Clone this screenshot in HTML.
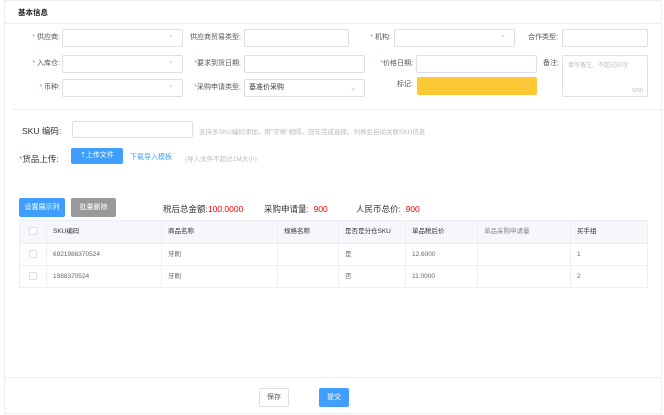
<!DOCTYPE html>
<html><head><meta charset="utf-8"><style>
*{box-sizing:border-box;margin:0;padding:0}
body{width:664px;height:415px;background:#fff;font-family:"Liberation Sans","Noto Sans CJK SC",sans-serif;font-size:7px;color:#333;position:relative;overflow:hidden}
.a{position:absolute}
.in{position:absolute;border:1px solid #dcdfe6;border-radius:2px;background:#fff;height:18px}
.ar::after{content:"⌄";position:absolute;right:8px;top:1px;color:#bbb;font-size:7px}
.lb{position:absolute;text-align:right;font-size:7px;color:#555;line-height:18px}
.r{color:#f56c6c}
.btn{position:absolute;border-radius:2px;color:#fff;font-size:7px;text-align:center}
table{border-collapse:collapse;position:absolute;left:19px;top:220px;width:629px;font-size:6.5px}
td,th{border:1px solid #ebeef5;text-align:left;padding-left:6px;font-weight:normal;vertical-align:middle;line-height:10px}
th{background:#f5f7fa;height:23px;color:#333}
td{height:22px;color:#666}
.cb{display:inline-block;width:8px;height:8px;border:1px solid #dcdfe6;border-radius:1px;background:#fff;vertical-align:middle}
</style></head><body>
<div class="a" style="left:4px;top:0;width:658px;height:414px;border:1px solid #eee"></div>
<div class="a" style="left:18px;top:7px;font-size:7.5px;font-weight:bold;color:#222">基本信息</div>
<div class="a" style="left:5px;top:23px;width:656px;border-top:1px solid #eee"></div>

<div class="lb" style="left:10px;top:29px;width:50px"><span class="r">* </span>供应商:</div>
<div class="in ar" style="left:62px;top:29px;width:121px"></div>
<div class="lb" style="left:180px;top:29px;width:61px">供应商贸易类型:</div>
<div class="in" style="left:244px;top:29px;width:105px"></div>
<div class="lb" style="left:350px;top:29px;width:41px"><span class="r">* </span>机构:</div>
<div class="in ar" style="left:394px;top:29px;width:121px"></div>
<div class="lb" style="left:515px;top:29px;width:43px">合作类型:</div>
<div class="in" style="left:562px;top:29px;width:86px"></div>

<div class="lb" style="left:10px;top:55px;width:50px"><span class="r">* </span>入库仓:</div>
<div class="in ar" style="left:62px;top:55px;width:121px"></div>
<div class="lb" style="left:180px;top:55px;width:61px"><span class="r">*</span>要求到货日期:</div>
<div class="in" style="left:244px;top:55px;width:121px"></div>
<div class="lb" style="left:360px;top:55px;width:53px"><span class="r">*</span>价格日期:</div>
<div class="in" style="left:416px;top:55px;width:121px"></div>
<div class="lb" style="left:530px;top:55px;width:29px">备注:</div>
<div class="in" style="left:562px;top:55px;width:86px;height:42px"><span class="a" style="left:5px;top:4px;color:#bbb;font-size:6px">填写备注，不超过50字</span><span class="a" style="right:4px;bottom:2px;color:#bbb;font-size:5.5px">0/50</span></div>

<div class="lb" style="left:10px;top:79px;width:50px"><span class="r">* </span>币种:</div>
<div class="in ar" style="left:62px;top:79px;width:121px"></div>
<div class="lb" style="left:180px;top:79px;width:61px"><span class="r">*</span>采购申请类型:</div>
<div class="in ar" style="left:244px;top:79px;width:121px;line-height:16px;padding-left:4px;color:#333">基准价采购</div>
<div class="lb" style="left:380px;top:76px;width:33px">标记:</div>
<div class="in ar" style="left:417px;top:77px;width:120px;background:#fcc934;border-color:#fcc934"></div>

<div class="a" style="left:12px;top:109px;width:650px;border-top:1px solid #eee"></div>

<div class="a" style="left:22px;top:125px;font-size:8.5px;color:#333">SKU 编码:</div>
<div class="in" style="left:72px;top:121px;width:121px;height:17px"></div>
<div class="a" style="left:199px;top:126px;font-size:6.5px;color:#bbb">支持多SKU编码添加，用"空格"相隔，回车完成选择，列表会自动关联SKU信息</div>

<div class="a" style="left:19px;top:153px;font-size:8.5px;color:#333"><span class="r">*</span>货品上传:</div>
<div class="btn" style="left:71px;top:148px;width:52px;height:16px;line-height:16px;background:#409eff">⇡上传文件</div>
<div class="a" style="left:130px;top:152px;font-size:7px;color:#409eff">下载导入模板</div>
<div class="a" style="left:185px;top:153px;font-size:6.5px;color:#bbb">(导入文件不超过1M大小)</div>

<div class="btn" style="left:19px;top:198px;width:46px;height:19px;line-height:19px;background:#409eff">设置展示列</div>
<div class="btn" style="left:71px;top:198px;width:45px;height:19px;line-height:19px;background:#999">批量删除</div>
<div class="a" style="left:163px;top:203px;font-size:8.5px;color:#333">税后总金额:<span style="color:#f00">100.0000</span></div>
<div class="a" style="left:264px;top:203px;font-size:8.5px;color:#333">采购申请量: &nbsp;<span style="color:#f00">900</span></div>
<div class="a" style="left:356px;top:203px;font-size:8.5px;color:#333">人民币总价: &nbsp;<span style="color:#f00">900</span></div>

<table>
<tr><th style="width:27px;padding-left:9px"><span class="cb"></span></th><th style="width:115px">SKU编码</th><th style="width:116px">商品名称</th><th style="width:61px">规格名称</th><th style="width:67px">是否是分仓SKU</th><th style="width:72px">单品税后价</th><th style="width:93px;color:#888">单品采购申请量</th><th>买手组</th></tr>
<tr><td style="padding-left:9px"><span class="cb"></span></td><td>6921988370524</td><td>牙刷</td><td></td><td>是</td><td>12.6000</td><td></td><td>1</td></tr>
<tr><td style="padding-left:9px"><span class="cb"></span></td><td>1988370524</td><td>牙刷</td><td></td><td>否</td><td>11.0000</td><td></td><td>2</td></tr>
</table>

<div class="a" style="left:5px;top:377px;width:656px;border-top:1px solid #eee"></div>
<div class="btn" style="left:259px;top:388px;width:30px;height:19px;line-height:17px;border:1px solid #dcdfe6;color:#555;background:#fff">保存</div>
<div class="btn" style="left:319px;top:388px;width:30px;height:19px;line-height:19px;background:#409eff">提交</div>
</body></html>
